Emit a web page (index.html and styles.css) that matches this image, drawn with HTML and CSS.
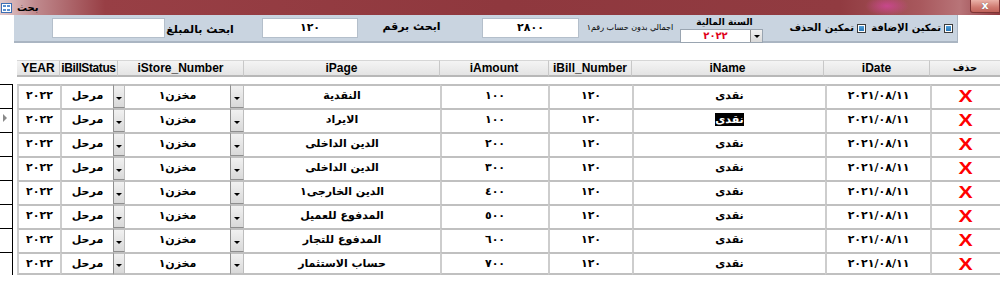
FILE: index.html
```html
<!DOCTYPE html>
<html lang="ar">
<head>
  <meta charset="UTF-8">
  <title>بحث</title>
  <link rel="stylesheet" href="styles.css">
</head>
<body>
  <div class="titlebar">
    <span class="form_icon">
      <svg width="11" height="10" viewBox="0 0 11 10">
        <rect x="0.5" y="0.5" width="10" height="9" fill="#fff" stroke="#3d6fb3"/>
        <rect x="2" y="2" width="3" height="2" fill="#5b8fd0"/>
        <rect x="6" y="2" width="3" height="2" fill="#5b8fd0"/>
        <rect x="2" y="6" width="3" height="2" fill="#5b8fd0"/>
        <rect x="6" y="6" width="3" height="2" fill="#5b8fd0"/>
      </svg>
    </span>
    <span class="title">بحث</span>
    <span class="close">x</span>
  </div>

  <div class="search_panel">
    <div class="box box_amount"></div>
    <div class="lbl lbl_amount"><span dir="rtl">ابحث بالمبلغ</span></div>
    <div class="box box_num">١٢٠</div>
    <div class="lbl lbl_num"><span dir="rtl">ابحث برقم</span></div>
    <div class="box box_total">٢٨٠٠</div>
    <div class="lbl_small"><span dir="rtl">اجمالي بدون حساب رقم١</span></div>
    <div class="year">
      <div class="year_lbl" dir="rtl">السنة المالية</div>
      <div class="combo">
        <span class="combo_val">٢٠٢٢</span>
        <span class="drop"></span>
      </div>
    </div>
    <div class="chk chk_del"><span dir="rtl">تمكين الحذف</span><i class="tick"></i></div>
    <div class="chk chk_add"><span dir="rtl">تمكين الإضافة</span><i class="tick"></i></div>
  </div>

  <div class="grid_head">
    <div class="h c_year">YEAR</div>
    <div class="h c_status">iBillStatus</div>
    <div class="h c_store">iStore_Number</div>
    <div class="h c_page">iPage</div>
    <div class="h c_amount">iAmount</div>
    <div class="h c_bill">iBill_Number</div>
    <div class="h c_name">iName</div>
    <div class="h c_date">iDate</div>
    <div class="h c_del">حذف</div>
  </div>

  <div class="grid" id="grid"></div>

  <script>
    const pages = ['النقدية','الايراد','الدين الداخلى','الدين الداخلى','الدين الخارجى١','المدفوع للعميل','المدفوع للتجار','حساب الاستثمار'];
    const amounts = ['١٠٠','١٠٠','٢٠٠','٣٠٠','٤٠٠','٥٠٠','٦٠٠','٧٠٠'];
    const grid = document.getElementById('grid');
    pages.forEach((page, i)=>{
      const row = document.createElement('div');
      row.className = 'row' + (i === pages.length-1 ? ' last' : '');
      row.innerHTML =
        `<div class="sel">${ i===1 ? '<i class="cur"></i>' : '' }</div>` +
        `<div class="d w_year">٢٠٢٢</div>` +
        `<div class="d w_status">مرحل</div><div class="btn w_btn1"></div>` +
        `<div class="d w_store">مخزن١</div><div class="btn w_btn2"></div>` +
        `<div class="d w_page">${page}</div>` +
        `<div class="d w_amount">${amounts[i]}</div>` +
        `<div class="d w_bill">١٢٠</div>` +
        `<div class="d w_name">${ i===1 ? '<span class="hl">نقدى</span>' : 'نقدى' }</div>` +
        `<div class="d w_date">٢٠٢١/٠٨/١١</div>` +
        `<div class="d w_del"><b class="x">X</b></div>`;
      grid.appendChild(row);
    });
  </script>
</body>
</html>
```

FILE: styles.css
```css
*{  box-sizing:border-box;  }
html,body{  margin:0;  padding:0;  }
body{
  width:1000px;  height:301px;  overflow:hidden;  background:#fff;
  font-family:"Liberation Sans","DejaVu Sans",sans-serif;  color:#000;
}

/* title bar */
.titlebar{
  height:15px;  display:flex;  align-items:center;
  background:
    radial-gradient(ellipse 22px 10px at 887px 6px, rgba(214,70,160,0.75), rgba(214,70,160,0) 100%),
    linear-gradient(90deg, #e2cacc 0, #c08a8e 35px, #983f45 105px, #8f383e 500px, #913b41 840px, #a8585d 920px, #b87478 960px, #8f383e 1000px);
}
.titlebar .form_icon{  width:11px;  height:10px;  margin-left:1px;  display:block;  }
.titlebar .form_icon svg{  display:block;  }
.titlebar .title{  font-size:10px;  font-weight:bold;  margin-left:5px;  line-height:12px;  }
.titlebar .close{
  margin-left:auto;  align-self:flex-start;  width:30px;  height:13px;
  background:linear-gradient(#eab2a8, #cf7a70 60%, #c0625a);
  border:1px solid #7d3434;  border-top:0;  border-radius:0 0 0 3px;
  color:#fff;  font:bold 11px/11px "DejaVu Sans",sans-serif;  text-align:center;
  text-shadow:0 0 1px #555;
}

/* search panel */
.search_panel{
  margin-left:14px;  width:944px;  height:28px;  display:flex;  align-items:flex-start;
  background:#c9d4e0;  border-bottom:2px solid #aab5c2;  border-right:1px solid #aab5c2;
}
.box{
  height:20px;  margin-top:3px;  background:#fff;  border:1px solid #b4bfcb;
  font:bold 11px/18px "DejaVu Sans",sans-serif;  text-align:center;
}
.box_amount{  margin-left:38px;  width:113px;  }
.box_num{  margin-left:34px;  width:96px;  }
.box_total{  margin-left:49px;  width:97px;  }
.lbl, .lbl_small{  display:flex;  justify-content:center;  white-space:nowrap;  }
.lbl{  font:bold 11px/14px "DejaVu Sans",sans-serif;  }
.lbl_amount{  margin-left:7px;  width:56px;  margin-top:8px;  }
.lbl_num{  margin-left:32px;  width:43px;  margin-top:5px;  }
.lbl_small{  margin-left:9px;  width:84px;  margin-top:8px;  font:8px/10px "DejaVu Sans",sans-serif;  }
.year{  margin-left:8px;  width:83px;  }
.year_lbl{  font:bold 9px/11px "DejaVu Sans",sans-serif;  text-align:center;  margin-top:2px;  padding-left:6px;  }
.combo{
  margin-top:1px;  height:14px;  display:flex;  background:#fff;  border:1px solid #9aa5b1;
}
.combo_val{  flex:1;  text-align:center;  color:#e0001a;  font:bold 10px/12px "DejaVu Sans",sans-serif;  }
.drop, .btn{
  position:relative;
  background:linear-gradient(#f1f1f1, #d9d9d9);  border:1px solid #8f8f8f;
}
.drop{  width:12px;  height:12px;  border-width:0 0 0 1px;  }
.drop::after, .btn::after{
  content:"";  position:absolute;  left:50%;  top:50%;  margin:-1px 0 0 -3px;
  border-left:3px solid transparent;  border-right:3px solid transparent;  border-top:3px solid #000;
}
.chk{
  display:flex;  align-items:center;  justify-content:flex-end;  gap:3px;  margin-top:6px;
  font:bold 10px/14px "DejaVu Sans",sans-serif;  white-space:nowrap;
}
.chk_del{  margin-left:40px;  width:63px;  }
.chk_add{  margin-left:22px;  width:65px;  }
.tick{
  display:block;  flex:none;  width:9px;  height:9px;  border:1px solid #3b3b3b;
  background:linear-gradient(#58a7e0, #1f6fb0);  box-shadow:inset 0 0 0 1px #fff;
}

/* grid header */
.grid_head{  display:flex;  margin:17px 0 0 17px;  height:17px;  }
.h{
  background:linear-gradient(#f4f4f4, #e4e4e4);  border-right:1px solid #c8c8c8;  border-top:1px solid #d6d6d6;
  border-bottom:2px solid #b8b8b8;  font-weight:bold;  font-size:12px;  line-height:14px;  text-align:center;
  white-space:nowrap;  overflow:hidden;
}
.c_year{  width:43px;  }
.c_status{  width:58px;  letter-spacing:-0.4px;  }
.c_store{  width:126px;  }
.c_page{  width:196px;  }
.c_amount{  width:109px;  }
.c_bill{  width:83px;  }
.c_name{  width:192px;  }
.c_date{  width:106px;  }
.c_del{  width:70px;  border-right:0;  font:bold 10px/14px "DejaVu Sans",sans-serif;  }

/* grid rows */
.grid{  margin-top:7px;  }
.row{  display:flex;  height:24px;  }
.row.last{  height:23px;  }
.sel{  width:13px;  margin-right:4px;  border-top:1px solid #000;  border-right:1px solid #000;  position:relative;  }
.sel .cur{
  position:absolute;  left:3px;  top:5px;
  border-top:4px solid transparent;  border-bottom:4px solid transparent;  border-left:4px solid #8a8a8a;
}
.d, .btn{  border-top:2px solid #c0c0c0;  }
.row.last .d, .row.last .btn{  border-bottom:2px solid #c0c0c0;  }
.d{
  background:#fff;  border-left:2px solid #cdcdcd;  text-align:center;  white-space:nowrap;
  font:bold 11px/19px "DejaVu Sans",sans-serif;  padding-top:0;
}
.btn{  border-left-color:#8f8f8f;  border-right-color:#bdbdbd;  border-bottom-color:#8f8f8f;  }
.btn::after{  margin-top:0;  }
.w_year{  width:43px;  }
.w_status{  width:53px;  }
.w_btn1{  width:12px;  }
.w_store{  width:105px;  border-left:0;  }
.w_btn2{  width:14px;  }
.w_page{  width:196px;  border-left:0;  }
.w_amount{  width:108px;  }
.w_bill{  width:84px;  }
.w_name{  width:193px;  }
.w_date{  width:105px;  }
.w_del{  width:70px;  }
.hl{  background:#000;  color:#fff;  }
.x{
  display:inline-block;  color:#f00;  font:bold 17px/21px "Liberation Sans",sans-serif;
  transform:scaleX(1.25);
}
```
